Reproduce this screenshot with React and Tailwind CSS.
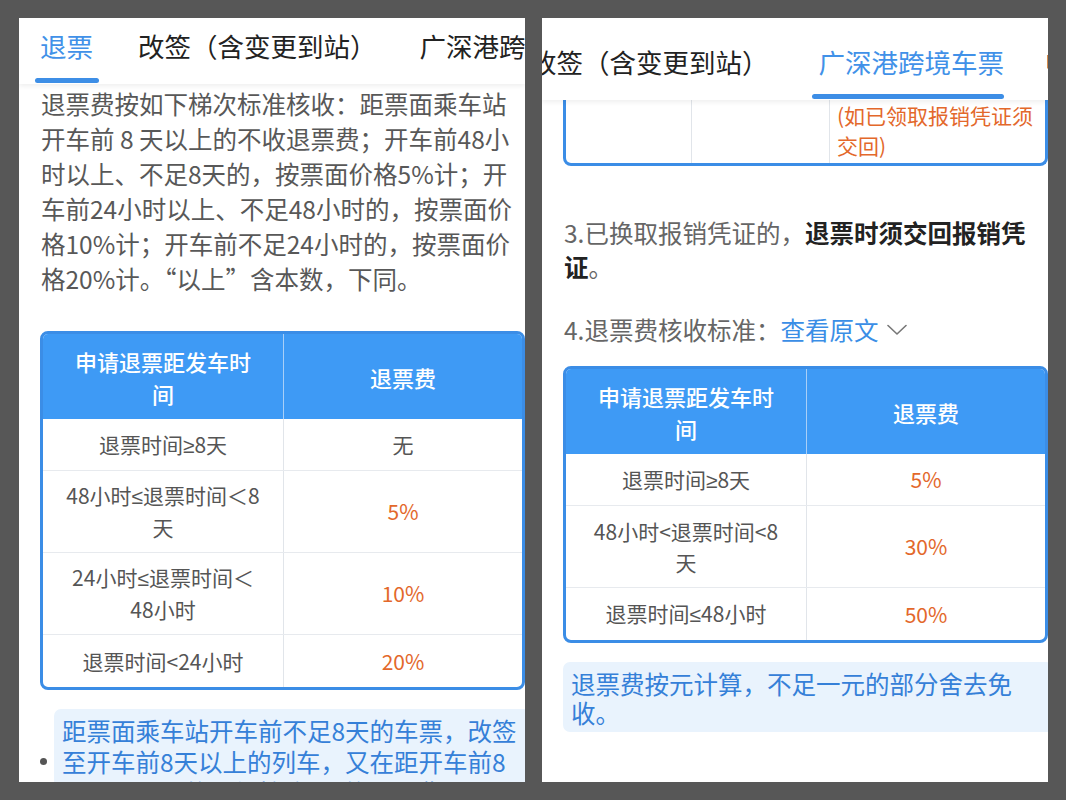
import React from 'react';

const leftRows = [
  { time: ['退票时间≥8天'], fee: '无', h: 'h-[52px]' },
  { time: ['48小时≤退票时间＜8', '天'], fee: '5%', h: 'h-[82px]' },
  { time: ['24小时≤退票时间＜', '48小时'], fee: '10%', h: 'h-[82px]' },
  { time: ['退票时间<24小时'], fee: '20%', h: 'h-[52px]' }
];

const rightRows = [
  { time: ['退票时间≥8天'], fee: '5%', h: 'h-[52px]' },
  { time: ['48小时<退票时间<8', '天'], fee: '30%', h: 'h-[82px]' },
  { time: ['退票时间≤48小时'], fee: '50%', h: 'h-[52px]' }
];

// the CJK font draws ≥ / ≤ full width, the screenshot has narrow ones
function withSymbols(text) {
  return text.split(/([≥≤])/).map((part, i) =>
    part === '≥' || part === '≤' ? (
      <span key={i} className="font-['Liberation_Sans',sans-serif]">
        {part}
      </span>
    ) : (
      part
    )
  );
}

function Indicator({ className }) {
  return <div className={`absolute bottom-[1px] h-[5px] rounded-full bg-[#3d8ee6] ${className}`} />;
}

function FeeTable({ rows }) {
  return (
    <div className="w-[485px] shrink-0 overflow-hidden rounded-[8px] border-[3px] border-[#3b8de6]">
      <div className="grid h-[85px] grid-cols-[241px_1fr] bg-[#3e9af5] text-[22px] font-medium leading-[32px] text-white">
        <div className="flex flex-col items-center justify-center border-r border-[#a9cff7]">
          <span>申请退票距发车时</span>
          <span>间</span>
        </div>
        <div className="flex items-center justify-center">退票费</div>
      </div>
      {rows.map((row, i) => (
        <div
          key={i}
          className={`grid grid-cols-[241px_1fr] text-[21px] leading-[31px] ${row.h} ${i < rows.length - 1 ? 'border-b border-[#e7eaee]' : ''}`}
        >
          <div className="flex flex-col items-center justify-center border-r border-[#e1e5ea] text-[#555]">
            {row.time.map((t) => (
              <span key={t}>{withSymbols(t)}</span>
            ))}
          </div>
          <div className={`flex items-center justify-center ${row.fee === '无' ? 'text-[#555]' : 'text-[#e3682b]'}`}>
            {row.fee}
          </div>
        </div>
      ))}
    </div>
  );
}

function LeftPanel() {
  return (
    <div className="flex h-[764px] w-[506px] shrink-0 flex-col overflow-hidden bg-white">
      <div className="relative z-10 flex h-[66px] shrink-0 items-start whitespace-nowrap bg-white pl-[21px] text-[26.5px] leading-[34px] text-[#222] shadow-[0_2px_5px_rgba(0,0,0,0.07)]">
        <div className="relative h-full pt-[11px] text-[#4191e8]">
          退票
          <Indicator className="-left-[5px] -right-[6px]" />
        </div>
        <div className="ml-[45px] pt-[11px]">改签（含变更到站）</div>
        <div className="ml-[43px] pt-[11px]">广深港跨境车票</div>
      </div>

      <div className="mt-[2px] pl-[22px] text-[24.5px] leading-[35px] whitespace-nowrap text-[#585858]">
        <div>退票费按如下梯次标准核收：距票面乘车站</div>
        <div>开车前 8 天以上的不收退票费；开车前48小</div>
        <div>时以上、不足8天的，按票面价格5%计；开</div>
        <div>车前24小时以上、不足48小时的，按票面价</div>
        <div>格10%计；开车前不足24小时的，按票面价</div>
        <div>格20%计。“以上”含本数，下同。</div>
      </div>

      <div className="mt-[35px] pl-[21px]">
        <FeeTable rows={leftRows} />
      </div>

      <div className="mt-[19px] flex items-center pl-[21px]">
        <div className="h-[7px] w-[7px] shrink-0 rounded-full bg-[#555]" />
        <div className="ml-[7px] w-[480px] shrink-0 rounded-[7px] bg-[#e9f3fd] pb-[6px] pl-[8px] pt-[6px] text-[24.5px] leading-[31px] whitespace-nowrap text-[#3580d8]">
          <div>距票面乘车站开车前不足8天的车票，改签</div>
          <div>至开车前8天以上的列车，又在距开车前8</div>
          <div>天以上退票的，仍核收5%的退票费。</div>
        </div>
      </div>
    </div>
  );
}

function RightPanel() {
  return (
    <div className="flex h-[764px] w-[506px] shrink-0 flex-col overflow-hidden bg-white">
      <div className="relative z-10 flex h-[82px] shrink-0 items-start whitespace-nowrap bg-white text-[26.5px] leading-[34px] text-[#222] shadow-[0_2px_5px_rgba(0,0,0,0.07)]">
        <div className="-ml-[12px] shrink-0 pt-[27px]">改签（含变更到站）</div>
        <div className="relative ml-[50px] h-full shrink-0 pt-[27px] text-[#4191e8]">
          广深港跨境车票
          <Indicator className="-left-[7px] right-[0px]" />
        </div>
        <div className="ml-[41px] shrink-0 pt-[27px]">中转换乘</div>
      </div>

      <div className="ml-[21px] grid h-[66px] w-[485px] shrink-0 grid-cols-[126px_138px_1fr] overflow-hidden rounded-b-[8px] border-x-[3px] border-b-[3px] border-[#3b8de6]">
        <div className="border-r border-[#e1e5ea]" />
        <div className="border-r border-[#e1e5ea]" />
        <div className="flex flex-col justify-end pb-[6px] pl-[7px] text-[21px] leading-[30px] whitespace-nowrap text-[#e3682b]">
          <span>(如已领取报销凭证须</span>
          <span>交回)</span>
        </div>
      </div>

      <div className="mt-[50px] pl-[22px] text-[24.5px] leading-[34px] whitespace-nowrap text-[#666]">
        <div>
          3.已换取报销凭证的，<span className="font-bold text-[#222]">退票时须交回报销凭</span>
        </div>
        <div>
          <span className="font-bold text-[#222]">证</span>。
        </div>
      </div>

      <div className="mt-[29px] flex items-center pl-[22px] text-[24.5px] leading-[34px] whitespace-nowrap text-[#666]">
        <span>4.退票费核收标准：</span>
        <span className="text-[#3a8ee6]">查看原文</span>
        <svg className="ml-[9px]" width="20" height="12" viewBox="0 0 20 12" fill="none">
          <polyline points="1,1.5 10,10 19,1.5" stroke="#777" strokeWidth="1.6" strokeLinecap="round" strokeLinejoin="round" />
        </svg>
      </div>

      <div className="mt-[19px] pl-[21px]">
        <FeeTable rows={rightRows} />
      </div>

      <div className="ml-[21px] mt-[19px] w-[490px] shrink-0 rounded-[7px] bg-[#e9f3fd] pb-[5px] pl-[8px] pt-[7px] text-[24.5px] leading-[29px] whitespace-nowrap text-[#3580d8]">
        <div>退票费按元计算，不足一元的部分舍去免</div>
        <div>收。</div>
      </div>
    </div>
  );
}

export default function App() {
  return (
    <div className="flex h-[800px] w-[1066px] gap-[17px] overflow-hidden bg-[#575757] pl-[19px] pt-[18px] font-['Noto_Sans_CJK_SC','Noto_Sans',sans-serif]">
      <LeftPanel />
      <RightPanel />
    </div>
  );
}
